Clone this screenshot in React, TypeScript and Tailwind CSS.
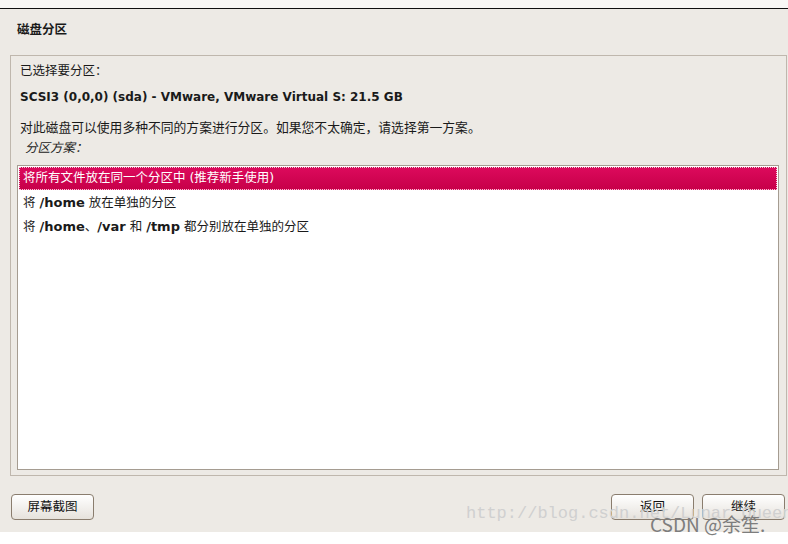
import React, { useState } from 'react';

const schemes = [
  { id: 0, parts: [{ t: '将所有文件放在同一个分区中 (推荐新手使用)' }] },
  { id: 1, parts: [{ t: '将 ' }, { t: '/home', b: true }, { t: ' 放在单独的分区' }] },
  {
    id: 2,
    parts: [
      { t: '将 ' },
      { t: '/home', b: true },
      { t: '、' },
      { t: '/var', b: true },
      { t: ' 和 ' },
      { t: '/tmp', b: true },
      { t: ' 都分别放在单独的分区' },
    ],
  },
];

function GtkButton({ label, className }: { label: string; className?: string }) {
  return (
    <button
      className={`h-[26px] rounded-[4px] border border-[#8a7d6e] bg-gradient-to-b from-white to-[#e6e2dc] text-[12.5px] text-[#111] ${className || ''}`}
    >
      {label}
    </button>
  );
}

export default function App() {
  const [selected, setSelected] = useState(0);

  return (
    <div
      className="relative w-[788px] h-[544px] overflow-hidden bg-white text-[#1a1a1a]"
      style={{ fontFamily: '"DejaVu Sans", "Noto Sans CJK SC", sans-serif' }}
    >
      <div className="h-[8px] bg-[#f8f7f5]" />
      <div className="h-[524px] border-t border-[#111] bg-[#edeae5] flex flex-col">
        {/* Title */}
        <div className="h-[46px] pl-[17px] pt-[13px] text-[12.5px] font-bold leading-[16px]">磁盘分区</div>

        {/* Frame */}
        <div className="ml-[10px] w-[777px] h-[421px] border border-[#bfb7ad] flex flex-col pl-[9px] pr-[7px]">
          <div className="mt-[6px] text-[12.5px] leading-[18px]">已选择要分区：</div>
          <div className="mt-[8px] text-[12px] font-bold leading-[18px]">
            SCSI3 (0,0,0) (sda) - VMware, VMware Virtual S: 21.5 GB
          </div>
          <div className="mt-[13px] text-[12.8px] leading-[18px]">
            对此磁盘可以使用多种不同的方案进行分区。如果您不太确定，请选择第一方案。
          </div>
          <div className="mt-[2px] pl-[5px] text-[12.5px] italic leading-[18px]">分区方案：</div>

          {/* List */}
          <div className="mt-[8px] ml-[-3px] w-[762px] h-[305px] border border-[#a59c91] bg-white p-[1px]">
            {schemes.map((s) => {
              const active = s.id === selected;
              return (
                <div
                  key={s.id}
                  onClick={() => setSelected(s.id)}
                  className={
                    active
                      ? 'h-[23px] mb-[1px] flex items-center pl-[3px] text-[12.5px] text-white bg-gradient-to-b from-[#dc0a5c] to-[#c70049] border border-dotted border-[#f7c8d8]'
                      : 'h-[24px] flex items-center pl-[4px] text-[12.5px] text-[#1a1a1a]'
                  }
                >
                  {s.parts.map((p, i) => (
                    <span key={i} className={p.b ? 'font-bold text-[13px] whitespace-pre' : 'whitespace-pre'}>
                      {p.t}
                    </span>
                  ))}
                </div>
              );
            })}
          </div>
        </div>

        {/* Buttons */}
        <div className="mt-[18px] flex items-center pl-[11px] pr-[3px]">
          <GtkButton label="屏幕截图" className="w-[83px]" />
          <div className="flex-1" />
          <GtkButton label="返回" className="w-[83px]" />
          <GtkButton label="继续" className="w-[83px] ml-[8px]" />
        </div>
      </div>

      {/* Watermarks */}
      <div
        className="pointer-events-none absolute left-[466px] top-[501px] whitespace-nowrap text-[17px] text-[#d0d0d0]"
        style={{ fontFamily: '"Liberation Mono", monospace' }}
      >
        http://blog.csdn.net/Lunar_Queen
      </div>
      <div
        className="pointer-events-none absolute left-[650px] top-[511px] whitespace-nowrap text-[19px] leading-[26px] text-[#7d7d7d]"
        style={{ fontFamily: '"Noto Sans CJK SC", sans-serif' }}
      >
        CSDN @余笙.
      </div>
    </div>
  );
}
